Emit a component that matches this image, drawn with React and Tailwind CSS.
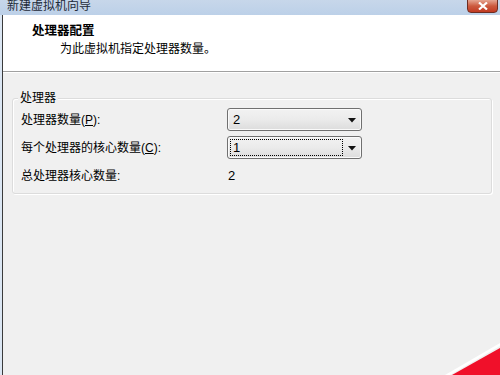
import React from "react";

const font = { fontFamily: '"Liberation Sans", "Noto Sans CJK SC", sans-serif' };

const Combo = ({ value, focused }) => {
  return (
    <div className="relative h-[23px] w-[135px] rounded-[3px] border border-[#707070] bg-gradient-to-b from-[#f2f2f2] via-[#ebebeb] to-[#dcdcdc] shadow-[inset_0_0_0_1px_#fafafa]">
      <div
        className={
          "absolute left-[2px] top-[2px] bottom-[2px] flex w-[113px] items-center pl-[2px] text-[13px] text-black " +
          (focused ? "border border-dotted border-black" : "border border-transparent")
        }
      >
        {value}
      </div>
      <svg className="absolute right-[5px] top-[9px]" width="8" height="5" viewBox="0 0 8 5">
        <polygon points="0,0 8,0 4,4.5" fill="#111" />
      </svg>
    </div>
  );
};

const App = () => {
  return (
    <div className="relative h-[375px] w-[500px] overflow-hidden bg-[#dbe6f3]" style={font}>
      {/* Title bar */}
      <div className="flex h-[15px] items-end justify-between bg-gradient-to-b from-[#c7d7ea] to-[#bcd0e8] pl-[7px]">
        <span className="-mb-[1px] text-[12px] leading-[19px] text-[#1e2a38]">新建虚拟机向导</span>
        <div className="mr-[2px] mb-[2px] flex h-[14px] w-[31px] items-center justify-center rounded-b-[4px] border border-[#6d2d22] bg-gradient-to-b from-[#e4a591] via-[#cc5a3e] to-[#c13a22]">
          <svg width="10" height="8" viewBox="0 0 10 8">
            <path d="M1 0.5 L9 7.5 M9 0.5 L1 7.5" stroke="#fff" strokeWidth="2.2" />
          </svg>
        </div>
      </div>

      {/* Window body */}
      <div className="ml-[2px] h-[360px] border-l border-[#3b3b3b] bg-[#f0f0f0]">
        {/* Header */}
        <div className="h-[57px] border-b border-[#a0a0a0] bg-white pl-[29px] pt-[8px]">
          <div className="text-[12.5px] font-bold leading-[16px] text-black">处理器配置</div>
          <div className="mt-[2px] pl-[28px] text-[12px] leading-[17px] text-black">为此虚拟机指定处理器数量。</div>
        </div>
        <div className="h-px bg-white" />

        {/* Group box */}
        <div className="relative ml-[9px] mr-[8px] mt-[25px] h-[96px] rounded-[3px] border border-[#dcdcdc] shadow-[1px_1px_0_#ffffff,inset_1px_1px_0_#ffffff]">
          <span className="absolute -top-[9px] left-[5px] bg-[#f0f0f0] px-[2px] text-[12px] leading-[16px] text-black">处理器</span>
          <div className="flex flex-col pl-[8px] pt-[9px] text-[12px] text-black">
            <div className="flex h-[23px] items-center">
              <span className="w-[206px]">处理器数量(<span className="underline">P</span>):</span>
              <Combo value="2" />
            </div>
            <div className="mt-[5px] flex h-[23px] items-center">
              <span className="w-[206px]">每个处理器的核心数量(<span className="underline">C</span>):</span>
              <Combo value="1" focused />
            </div>
            <div className="mt-[5px] flex h-[23px] items-center">
              <span className="w-[207px]">总处理器核心数量:</span>
              <span className="text-[13px]">2</span>
            </div>
          </div>
        </div>
      </div>

      {/* Red decoration corner */}
      <svg className="absolute bottom-0 right-0" width="60" height="40" viewBox="0 0 60 40">
        <polygon points="10,40 60,11 60,8 5,40" fill="#ffffff" />
        <polygon points="12,40 60,13 60,40" fill="#f0102a" />
      </svg>
    </div>
  );
};

export default App;
